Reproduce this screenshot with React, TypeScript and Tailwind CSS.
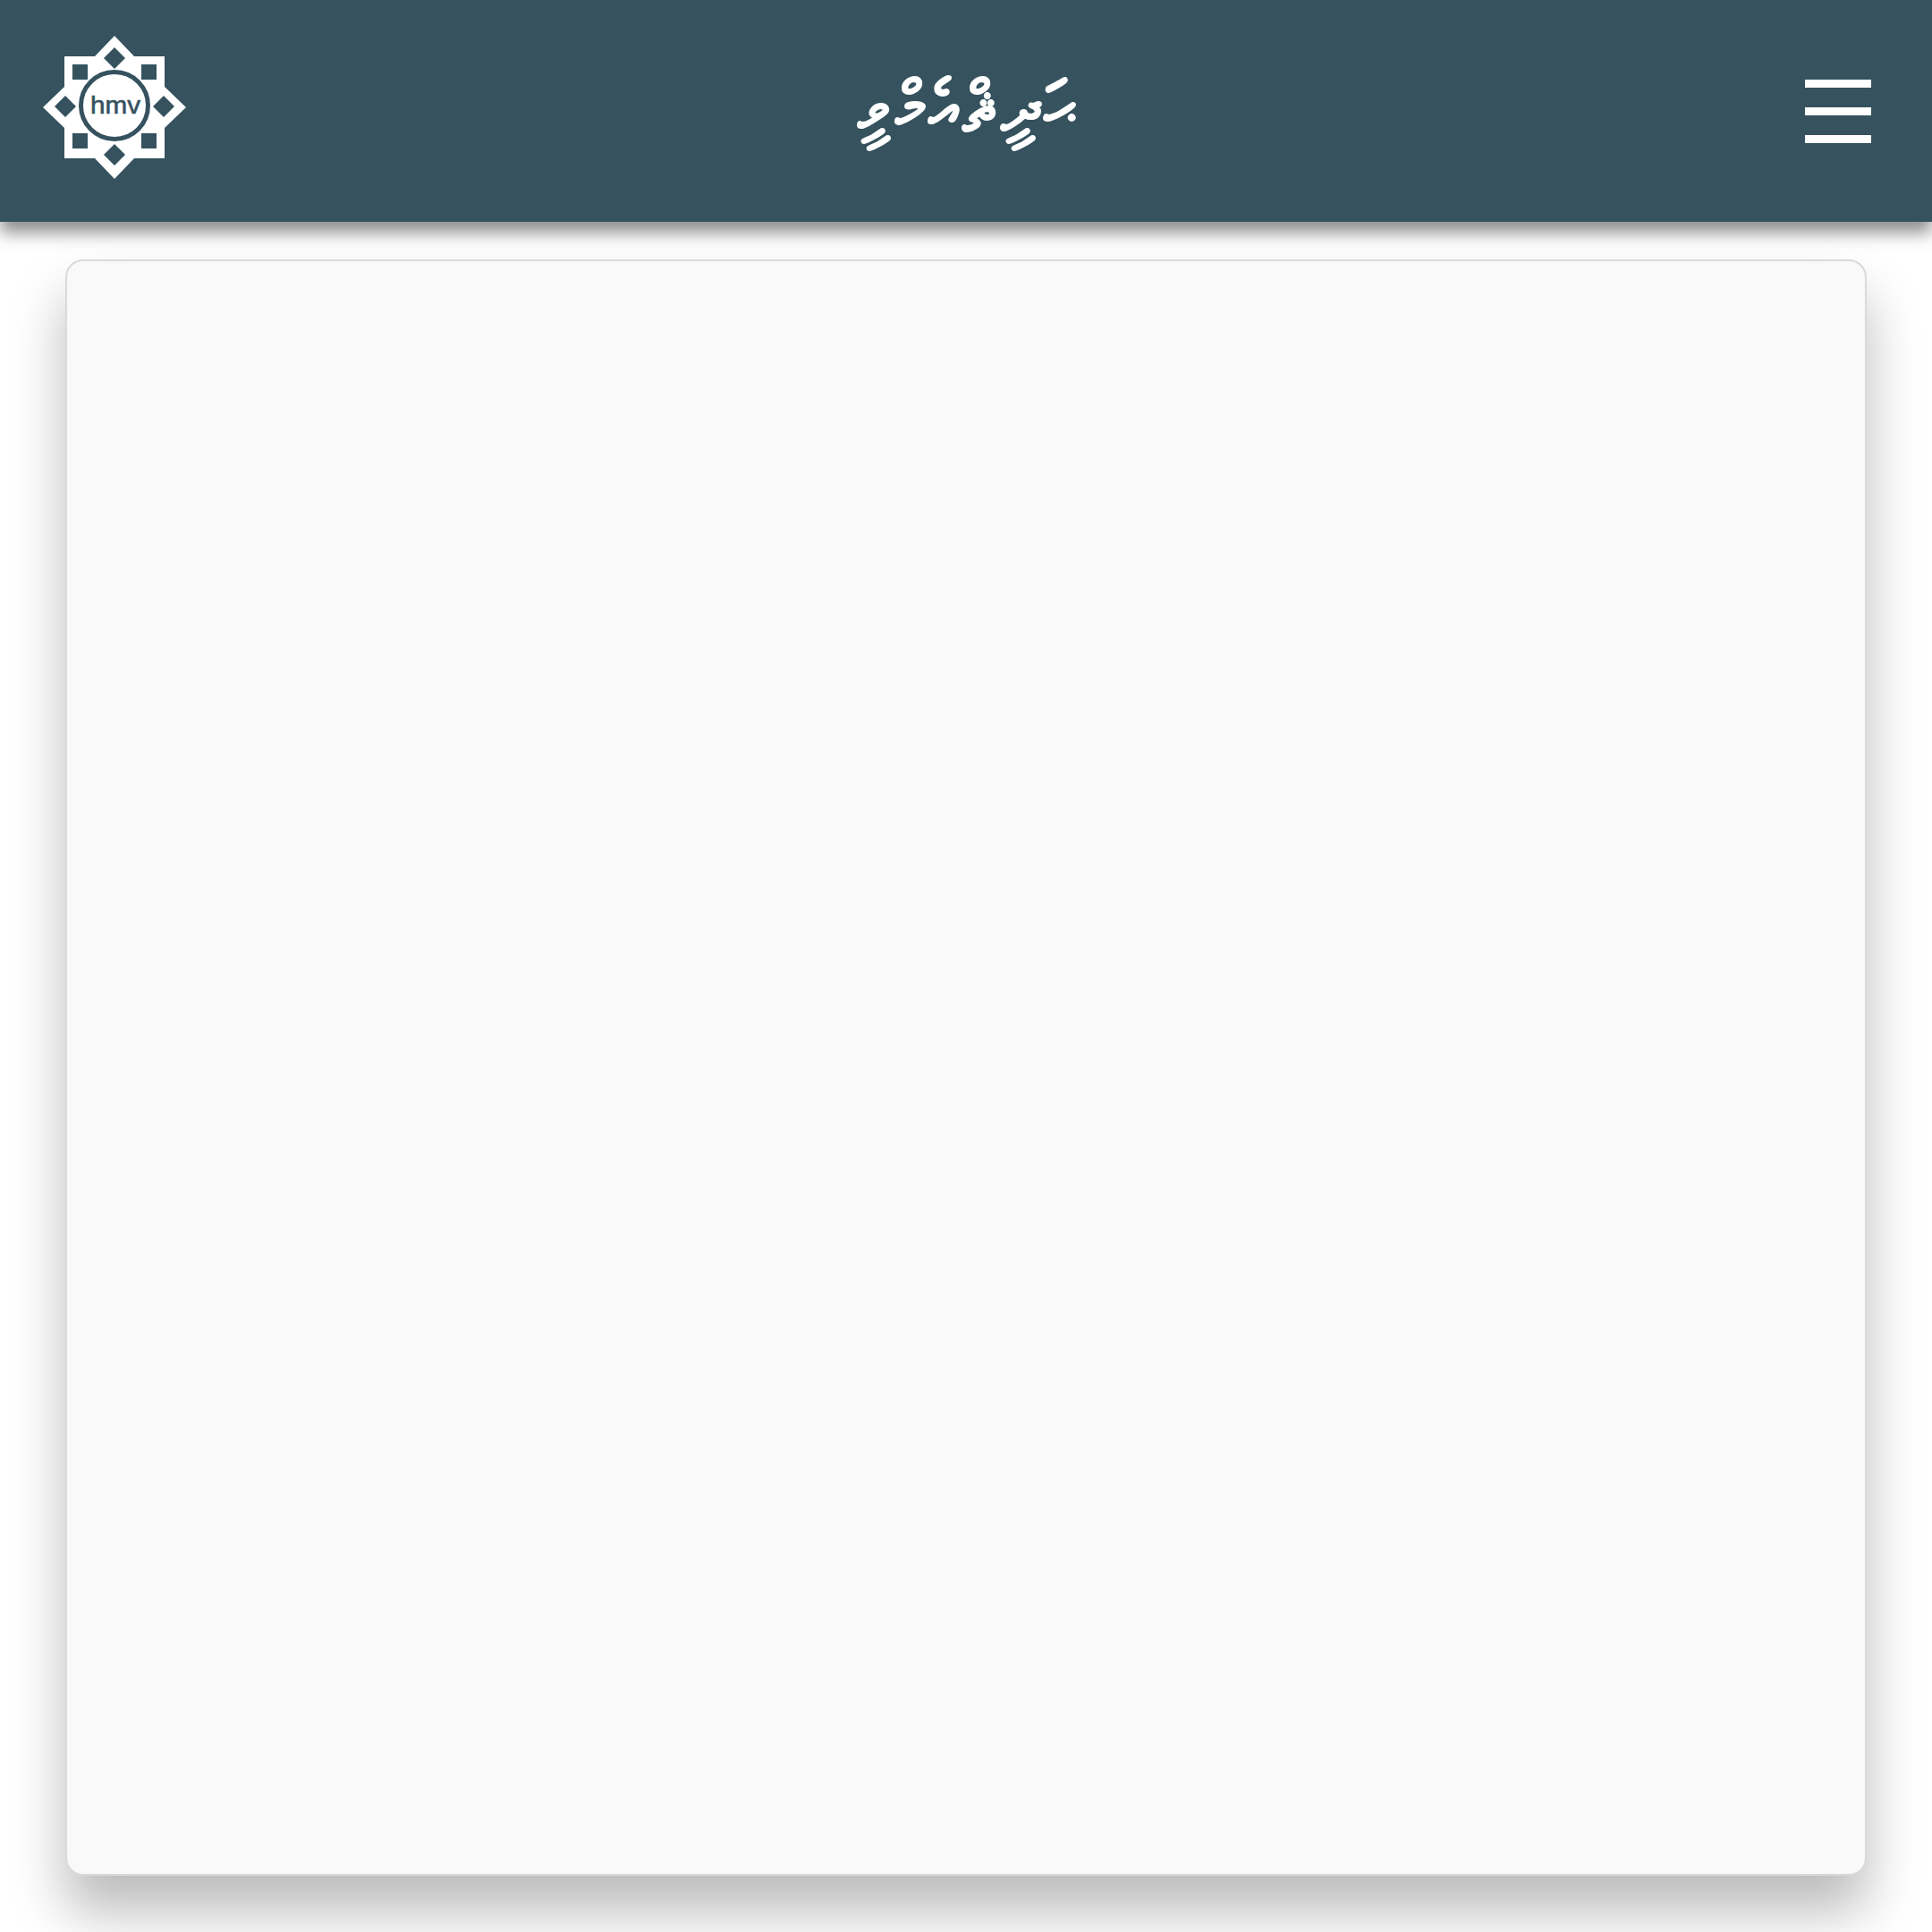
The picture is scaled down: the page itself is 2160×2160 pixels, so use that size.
function Logo() {
  return (
    <svg width="160" height="160" viewBox="48 40 160 160" className="block">
      <path
        d="M128 40 L150 63 L184 63 L184 97 L208 120 L184 143 L184 177 L150 177 L128 200 L106 177 L72 177 L72 143 L48 120 L72 97 L72 63 L106 63 Z"
        fill="#fff"
      />
      <g fill="#35525e">
        <rect x="81" y="72" width="17" height="17" />
        <rect x="158" y="72" width="17" height="17" />
        <rect x="81" y="149" width="17" height="17" />
        <rect x="158" y="149" width="17" height="17" />
        <path d="M128 53 L140 65 L128 77 L116 65 Z" />
        <path d="M128 161 L140 173 L128 185 L116 173 Z" />
        <path d="M73 107 L85 119 L73 131 L61 119 Z" />
        <path d="M183 107 L195 119 L183 131 L171 119 Z" />
      </g>
      <circle cx="128" cy="118" r="37.5" fill="#fff" stroke="#35525e" strokeWidth="5" />
      <text x="101" y="127" fontSize="28" fontFamily="'Liberation Sans', sans-serif" fill="#35525e" stroke="#35525e" strokeWidth="0.6" textLength="56" lengthAdjust="spacingAndGlyphs">
        hmv
      </text>
    </svg>
  );
}

export default function App() {
  return (
    <div className="h-[2160px] overflow-hidden bg-white font-['Liberation_Sans',sans-serif]">
      <header className="relative z-10 grid h-[248px] grid-cols-3 items-center bg-[#35525e] px-[68px] shadow-[0_12px_18px_rgba(0,0,0,0.45)]">
        <div className="-ml-[20px] -mt-[8px]">
          <Logo />
        </div>
        <div dir="rtl" className="-mt-[17px] pl-[8px] text-center text-[77px] leading-none tracking-[5px] text-white font-['Noto_Sans',sans-serif] [-webkit-text-stroke:2px_white]">
          ޙަދީޘްއެމްވީ
        </div>
        <button className="flex w-[74px] flex-col gap-[22px] justify-self-end">
          <span className="h-[9px] bg-white" />
          <span className="h-[9px] bg-white" />
          <span className="h-[9px] bg-white" />
        </button>
      </header>
      <main className="px-[73px] pt-[42px]">
        <div className="h-[1807px] rounded-[20px] border-2 border-[#d9dade] bg-[#f9f9f9] shadow-[0_40px_60px_rgba(0,0,0,0.27)]" />
      </main>
    </div>
  );
}
